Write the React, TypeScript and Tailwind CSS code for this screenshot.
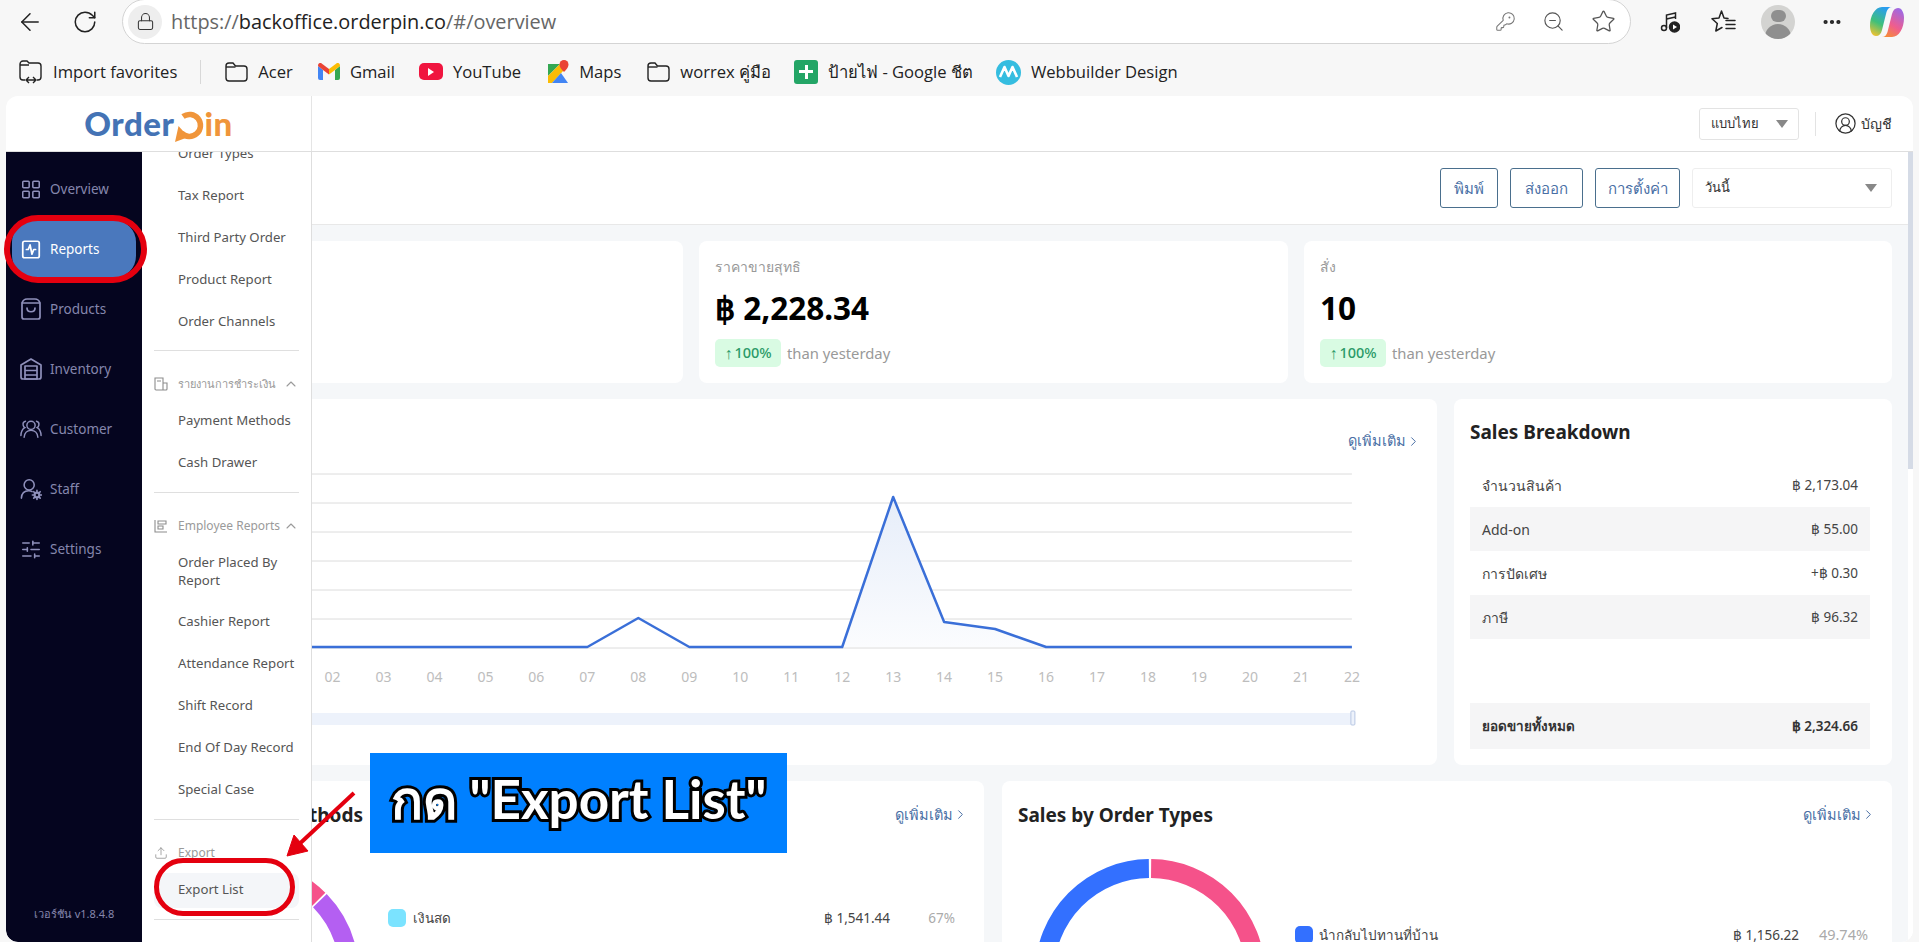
import { ArrowLeft, ChevronRight, ChevronUp, LayoutGrid, Lock, MoreHorizontal, RotateCw, SlidersHorizontal, SquareActivity, Star, Upload, ZoomOut, KeyRound, CircleUserRound } from "lucide-react";
import type { ReactNode } from "react";

const chromeFont = "font-['Open_Sans','Noto_Sans',sans-serif]";

function FolderIcon() {
  return (
    <svg width="24" height="22" viewBox="0 0 24 22" fill="none" stroke="#222" strokeWidth="1.4">
      <path d="M2 5a3 3 0 0 1 3-3h4l2.5 3H20a3 3 0 0 1 3 3v9a3 3 0 0 1-3 3H5a3 3 0 0 1-3-3Z" />
      <path d="M2 6h9.5" />
    </svg>
  );
}

function Bookmark({ icon, label }: { icon: ReactNode; label: string }) {
  return (
    <div className="flex items-center gap-[10px]">
      {icon}
      <span className="text-[16.6px] text-[#222] whitespace-nowrap">{label}</span>
    </div>
  );
}

function BrowserChrome() {
  return (
    <div className={chromeFont}>
      <div className="h-[48px] flex items-start">
        <div className="w-[122px] h-[44px] flex items-center pl-[16px] gap-[28px] shrink-0">
          <ArrowLeft size={28} strokeWidth={1.3} color="#222" />
          <RotateCw size={26} strokeWidth={1.4} color="#222" />
        </div>
        <div className="w-[1509px] h-[45px] -mt-px bg-white rounded-r-full rounded-l-full border border-[#d4d4d4] flex items-center pl-[5px] pr-[14px] shrink-0">
          <div className="w-[34px] h-[34px] rounded-full bg-[#eeeeee] flex items-center justify-center">
            <Lock size={19} strokeWidth={1.3} color="#333" />
          </div>
          <div className="ml-[9px] text-[19.9px] text-[#666] whitespace-nowrap">
            https://<span className="text-[#222]">backoffice.orderpin.co</span>/#/overview
          </div>
          <div className="ml-auto flex items-center gap-[26px] text-[#777]">
            <KeyRound size={21} strokeWidth={1.2} />
            <ZoomOut size={23} strokeWidth={1.2} color="#555" />
            <Star size={25} strokeWidth={1.2} color="#555" />
          </div>
        </div>
        <div className="flex-1 h-[44px] flex items-center relative">
          <svg className="ml-[29px]" width="20" height="22" viewBox="0 0 20 22" fill="none" stroke="#222" strokeWidth="1.5">
            <circle cx="4" cy="17" r="2.5" />
            <path d="M6.5 17V4l9-2v6" />
            <path d="M6.5 8l9-2" />
            <circle cx="14.5" cy="16" r="5" fill="#222" />
            <path d="M13 13.5v5l4-2.5Z" fill="#fff" stroke="none" />
          </svg>
          <svg className="ml-[31px]" width="26" height="26" viewBox="0 0 26 26" fill="none" stroke="#222" strokeWidth="1.5" strokeLinejoin="round" strokeLinecap="round">
            <path d="M17 9.500 13 9 10.500 2 8 9l-7 .8 5.300 4.700L4.800 22l6.200-3.500" />
            <path d="M15 11.500h9M15 15.500h9M15 19.500h9" />
          </svg>
          <div className="ml-[24px] w-[34px] h-[34px] rounded-full bg-[#d3d3d1] overflow-hidden flex flex-col items-center shrink-0">
            <div className="w-[15px] h-[15px] mt-[5px] rounded-full bg-[#8f8f8f]" />
            <div className="w-[26px] h-[20px] mt-[2px] rounded-t-full bg-[#8f8f8f]" />
          </div>
          <MoreHorizontal className="ml-[26px]" size={22} strokeWidth={2.6} color="#222" />
          <svg className="ml-[27px]" width="34" height="32" viewBox="0 0 34 32">
            <defs>
              <linearGradient id="cpA" x1="0.6" y1="0" x2="0.2" y2="1">
                <stop offset="0" stopColor="#2a9df0" />
                <stop offset="0.55" stopColor="#3fc07a" />
                <stop offset="1" stopColor="#f2c230" />
              </linearGradient>
              <linearGradient id="cpB" x1="0.8" y1="0" x2="0.3" y2="1">
                <stop offset="0" stopColor="#9a6ae8" />
                <stop offset="0.6" stopColor="#ef5d8e" />
                <stop offset="1" stopColor="#f58a3c" />
              </linearGradient>
            </defs>
            <path d="M12 1h10c-3 0-4.500 2-5.500 5L12 24c-1 4-3 6-6 6-4 0-6-5-6-10C0 10 5 1 12 1Z" fill="url(#cpA)" />
            <path d="M22 31H12c3 0 4.500-2 5.500-5L22 8c1-4 3-6 6-6 4 0 6 5 6 10 0 10-5 19-12 19Z" fill="url(#cpB)" />
          </svg>
        </div>
      </div>
      <div className="h-[48px] flex items-center pl-[18px]">
        <Bookmark
          label="Import favorites"
          icon={
            <svg width="25" height="24" viewBox="0 0 25 24" fill="none" stroke="#222" strokeWidth="1.4">
              <path d="M7 20H5a3 3 0 0 1-3-3V4a3 3 0 0 1 3-3h4l2 2h9a3 3 0 0 1 3 3v11a3 3 0 0 1-3 3h-1" />
              <path d="M2 5h9M9 20h8M11 17l-3 3 3 3M15 17l3 3-3 3" />
            </svg>
          }
        />
        <div className="w-px h-[24px] bg-[#d8d8d8] mx-[23px]" />
        <Bookmark label="Acer" icon={<FolderIcon />} />
        <div className="ml-[25px]">
          <Bookmark
            label="Gmail"
            icon={
              <svg width="22" height="17" viewBox="0 0 22 17">
                <path d="M0 3v12a2 2 0 0 0 2 2h3V7Z" fill="#4285f4" />
                <path d="M22 3v12a2 2 0 0 1-2 2h-3V7Z" fill="#34a853" />
                <path d="M0 3l5 4 6 4.500V6L3 0C1 -.5 0 1 0 3Z" fill="#ea4335" />
                <path d="M22 3l-5 4-6 4.500V6l8-6c2-.5 3 1 3 3Z" fill="#fbbc04" />
              </svg>
            }
          />
        </div>
        <div className="ml-[24px]">
          <Bookmark
            label="YouTube"
            icon={
              <div className="w-[24px] h-[17px] rounded-[5px] bg-[#f0153f] flex items-center justify-center">
                <div className="w-0 h-0 border-y-[4px] border-y-transparent border-l-[6px] border-l-white" />
              </div>
            }
          />
        </div>
        <div className="ml-[26px]">
          <Bookmark
            label="Maps"
            icon={
              <svg width="22" height="24" viewBox="0 0 22 24">
                <path d="M1 4h12L1 16Z" fill="#34a853" />
                <path d="M1 16 13 4l4 6L5 23H1Z" fill="#fbbc04" />
                <path d="M5 23 14 13l7 10Z" fill="#4285f4" />
                <path d="M17 0a4.500 4.500 0 0 1 4.500 4.500C21.500 8 17 12 17 12s-4.500-4-4.500-7.500A4.500 4.500 0 0 1 17 0Z" fill="#ea4335" />
              </svg>
            }
          />
        </div>
        <div className="ml-[25px]">
          <Bookmark label="worrex คู่มือ" icon={<FolderIcon />} />
        </div>
        <div className="ml-[23px]">
          <Bookmark
            label="ป้ายไฟ - Google ชีต"
            icon={
              <div className="w-[24px] h-[24px] rounded-[3px] bg-[#23a566] flex items-center justify-center relative">
                <div className="w-[14px] h-[3px] bg-white" />
                <div className="absolute w-[3px] h-[14px] bg-white" />
              </div>
            }
          />
        </div>
        <div className="ml-[23px]">
          <Bookmark
            label="Webbuilder Design"
            icon={
              <svg width="25" height="25" viewBox="0 0 25 25">
                <circle cx="12.500" cy="12.500" r="12.500" fill="#35bde0" />
                <path d="M4 17 8.500 7l4 9 4-9L21 17" fill="none" stroke="#fff" strokeWidth="2.600" strokeLinejoin="round" />
              </svg>
            }
          />
        </div>
      </div>
    </div>
  );
}

function Logo() {
  return (
    <div className="flex items-center font-['Lato',sans-serif] font-black text-[33px] leading-none tracking-[0.5px]">
      <span className="text-[#4473b5]">Order</span>
      <svg className="mt-[7px]" width="30" height="32" viewBox="0 0 30 32" fill="none">
        <path d="M9 5.500A11 11 0 1 1 7.500 22" stroke="#f0953a" strokeWidth="5.500" />
        <path d="M1 31 4.500 15l10 11Z" fill="#f0953a" />
      </svg>
      <span className="text-[#f0953a]">in</span>
    </div>
  );
}

function PageHeader() {
  return (
    <div className="h-[56px] flex border-b border-[#dedede] shrink-0">
      <div className="w-[306px] border-r border-[#e5e5e5] flex items-center justify-center">
        <Logo />
      </div>
      <div className="flex-1 flex items-center justify-end pr-[21px]">
        <div className="w-[100px] h-[32px] border border-[#e3e3e3] rounded-[3px] flex items-center justify-between pl-[11px] pr-[10px] text-[13px] text-[#333]">
          แบบไทย
          <div className="w-0 h-0 border-x-[6px] border-x-transparent border-t-[8px] border-t-[#888]" />
        </div>
        <div className="w-px h-[24px] bg-[#e3e3e3] ml-[16px] mr-[18px]" />
        <CircleUserRound size={23} strokeWidth={1.3} color="#333" />
        <span className="ml-[4px] text-[14px] text-[#333]">บัญชี</span>
      </div>
    </div>
  );
}

function BagIcon() {
  return (
    <svg width="20" height="22" viewBox="0 0 20 22" fill="none" stroke="currentColor" strokeWidth="1.700">
      <path d="M1 5h18v14a2 2 0 0 1-2 2H3a2 2 0 0 1-2-2Z" strokeLinejoin="round" />
      <path d="M1 5c1-3 3-4 5-4h8c2 0 4 1 5 4" />
      <path d="M6 10c0 5 8 5 8 0" strokeLinecap="round" />
    </svg>
  );
}

function InventoryIcon() {
  return (
    <svg width="22" height="22" viewBox="0 0 22 22" fill="none" stroke="currentColor" strokeWidth="1.700" strokeLinejoin="round">
      <path d="M1 7 11 1l10 6v12a2 2 0 0 1-2 2H3a2 2 0 0 1-2-2Z" />
      <path d="M5 8h12v13H5ZM5 12.500h12M5 17h12" />
    </svg>
  );
}

function CustomerIcon() {
  return (
    <svg width="24" height="20" viewBox="0 0 24 20" fill="none" stroke="currentColor" strokeWidth="1.600" strokeLinecap="round">
      <circle cx="12" cy="6" r="4.500" />
      <path d="M4.500 19c.5-5 3-7.500 7.500-7.500S19 14 19.500 19" />
      <path d="M6 1.500C4 2 3 4 3.500 6c.2 1 .8 2 1.800 2.500C2.500 10 1.200 13 1 17M18 1.500c2 .5 3 2.500 2.500 4.500-.2 1-.8 2-1.800 2.500 2.800 1.500 4.100 4.500 4.300 8.500" />
    </svg>
  );
}

function StaffIcon() {
  return (
    <svg width="24" height="24" viewBox="0 0 24 24" fill="none" stroke="currentColor" strokeWidth="1.700" strokeLinecap="round">
      <circle cx="10" cy="7.500" r="5.500" />
      <path d="M1.500 22c.3-5 3.500-8 8-8 1.500 0 2.700.3 3.700.9" />
      <circle cx="18.500" cy="18.500" r="2.600" strokeWidth="2.400" />
      <path d="M18.500 13.500v1.200M18.500 22.300v1.200M13.500 18.500h1.200M22.300 18.500h1.200M15 15l.9.9M21.100 21.100l.9.9M22 15l-.9.9M15.900 21.100l-.9.9" strokeWidth="1.800" />
    </svg>
  );
}

const navItems: { label: string; icon: ReactNode; active?: boolean }[] = [
  { label: "Overview", icon: <LayoutGrid size={23} strokeWidth={1.7} /> },
  { label: "Reports", icon: <SquareActivity size={23} strokeWidth={1.9} />, active: true },
  { label: "Products", icon: <BagIcon /> },
  { label: "Inventory", icon: <InventoryIcon /> },
  { label: "Customer", icon: <CustomerIcon /> },
  { label: "Staff", icon: <StaffIcon /> },
  { label: "Settings", icon: <SlidersHorizontal size={23} strokeWidth={1.7} /> },
];

function Sidebar() {
  return (
    <div className="w-[136px] bg-[#05051f] flex flex-col pt-[7px] shrink-0 rounded-bl-[12px]">
      {navItems.map((n) => (
        <div
          key={n.label}
          className={`mx-[6px] h-[58px] my-px rounded-[22px] flex items-center pl-[8px] ${n.active ? "bg-[#4a78bd] text-white" : "text-[#8f90bb]"}`}
        >
          <div className="w-[22px] flex justify-center shrink-0">{n.icon}</div>
          <span className={`ml-[8px] text-[13.5px] ${n.active ? "text-white" : "text-[#8587ad]"}`}>{n.label}</span>
        </div>
      ))}
      <div className="mt-auto pb-[20px] text-center text-[11px] text-[#8587ad]">เวอร์ชัน v1.8.4.8</div>
    </div>
  );
}

function MenuItem({ label, active }: { label: string; active?: boolean }) {
  return (
    <div className="h-[42px] flex items-center">
      <div className={`w-[146px] h-[35px] flex items-center pl-[24px] rounded-[8px] text-[13.2px] text-[#555] whitespace-nowrap ${active ? "bg-[#f4f6f9]" : ""}`}>
        {label}
      </div>
    </div>
  );
}

function MenuHeader({ icon, label, chevron = true, small }: { icon: ReactNode; label: string; chevron?: boolean; small?: boolean }) {
  return (
    <div className="h-[40px] mt-[13px] -mb-[4px] flex items-center text-[#9a9a9a]">
      <div className="w-[24px] shrink-0 text-[#8c8c8c]">{icon}</div>
      <span className={`whitespace-nowrap ${small ? "text-[11px]" : "text-[12px]"}`}>{label}</span>
      {chevron && <ChevronUp className="ml-auto" size={16} strokeWidth={1.6} />}
    </div>
  );
}

function Divider({ className = "mt-[8px]" }: { className?: string }) {
  return <div className={`h-px bg-[#dfdfdf] ${className}`} />;
}

function Submenu() {
  return (
    <div className="w-[170px] border-r border-[#dedede] bg-white overflow-hidden shrink-0 pl-[12px] pr-[12px]">
      <div className="-mt-[19px]">
        {["Order Types", "Tax Report", "Third Party Order", "Product Report", "Order Channels"].map((s) => (
          <MenuItem key={s} label={s} />
        ))}
        <Divider className="mt-[7px]" />
        <MenuHeader
          small
          label="รายงานการชำระเงิน"
          icon={
            <svg width="14" height="14" viewBox="0 0 14 14" fill="none" stroke="currentColor" strokeWidth="1.100">
              <path d="M1 1h8v12H2a1 1 0 0 1-1-1ZM9 6h4v6a1 1 0 0 1-1 1H9ZM3 4h4" />
            </svg>
          }
        />
        <MenuItem label="Payment Methods" />
        <MenuItem label="Cash Drawer" />
        <Divider />
        <MenuHeader
          label="Employee Reports"
          icon={
            <svg width="14" height="14" viewBox="0 0 14 14" fill="none" stroke="currentColor" strokeWidth="1.100">
              <path d="M1 1v12h12M4 2h8v3H4ZM4 7h5v3H4Z" />
            </svg>
          }
        />
        <div className="h-[59px] pb-[2px] flex items-center pl-[24px] text-[13.2px] leading-[18px] text-[#555]">Order Placed By<br />Report</div>
        {["Cashier Report", "Attendance Report", "Shift Record", "End Of Day Record", "Special Case"].map((s) => (
          <MenuItem key={s} label={s} />
        ))}
        <Divider />
        <MenuHeader label="Export" chevron={false} icon={<Upload size={14} strokeWidth={1.300} />} />
        <MenuItem label="Export List" active />
        <Divider />
      </div>
    </div>
  );
}

function StatCard({ label, value, className }: { label?: string; value?: string; className: string }) {
  return (
    <div className={`h-[142px] bg-white rounded-[8px] pl-[16px] ${className}`}>
      {label && (
        <>
          <div className="pt-[15px] h-[37px] text-[14px] text-[#999] leading-[22px]">{label}</div>
          <div className="mt-[8px] h-[44px] text-[31.5px] leading-[44px] font-bold text-black">{value}</div>
          <div className="mt-[9px] flex items-center">
            <div className="w-[66px] h-[28px] rounded-[5px] bg-[#d9fbe3] text-[#2b9a68] text-[14.5px] font-medium flex items-center justify-center gap-[2px]">
              <span className="text-[16px] font-bold leading-none">↑</span>100%
            </div>
            <span className="ml-[6px] text-[14.8px] text-[#999]">than yesterday</span>
          </div>
        </>
      )}
    </div>
  );
}

function MoreLink() {
  return (
    <div className="flex items-center text-[14.5px] text-[#4a6fa5] whitespace-nowrap">
      ดูเพิ่มเติม
      <ChevronRight size={15} strokeWidth={1.6} />
    </div>
  );
}

// x of a label in the chart svg, 50.97px per hour, "02" sitting at x=20.5
const chartX = (h: number) => 20.5 + (h - 2) * 50.97;
const chartHours = Array.from({ length: 21 }, (_, i) => i + 2);
const gridYs = [13, 42, 71, 100, 129, 158, 187];
const chartLine: [number, number][] = [
  [-20, 186], [7, 186], [8, 157], [9, 186], [12, 186], [13, 36], [14, 161], [15, 168], [16, 186], [22, 186],
];

function SalesChart() {
  const pts = chartLine.map(([h, y]) => `${h < 0 ? 0 : chartX(h)},${y}`).join(" ");
  return (
    <svg width="1060" height="279" viewBox="0 0 1060 279" className="block">
      <defs>
        <linearGradient id="peak" x1="0" y1="0" x2="0" y2="1">
          <stop offset="0" stopColor="#e6edf9" />
          <stop offset="1" stopColor="#fbfcfe" />
        </linearGradient>
      </defs>
      {gridYs.map((y) => (
        <line key={y} x1="0" x2={chartX(22)} y1={y} y2={y} stroke="#dcdcdc" strokeWidth="1" />
      ))}
      <polygon points={`${chartX(12)},186 ${chartX(13)},36 ${chartX(14)},161 ${chartX(15)},168 ${chartX(16)},186`} fill="url(#peak)" />
      <polyline points={pts} fill="none" stroke="#3a6fd8" strokeWidth="2.5" strokeLinejoin="round" />
      {chartHours.map((h) => (
        <text key={h} x={chartX(h)} y="221" textAnchor="middle" fontSize="14" fill="#bdbdbd">
          {String(h).padStart(2, "0")}
        </text>
      ))}
      <rect x="0" y="252" width={chartX(22)} height="12" fill="#edf2fb" />
      <rect x={chartX(22) - 1} y="250" width="4" height="14" rx="1" fill="#edf2fb" stroke="#b9c8e4" />
    </svg>
  );
}

function BreakdownRow({ label, value, shaded }: { label: string; value: string; shaded?: boolean }) {
  return (
    <div className={`h-[44px] flex items-center justify-between pl-[12px] pr-[12px] text-[#444] ${shaded ? "bg-[#f5f5f6]" : ""}`}>
      <span className="text-[14px]">{label}</span>
      <span className="text-[13.5px]">{value}</span>
    </div>
  );
}

function arcPath(cx: number, cy: number, r: number, a0: number, a1: number) {
  const p = (a: number) => {
    const t = (a * Math.PI) / 180;
    return `${cx + r * Math.sin(t)} ${cy - r * Math.cos(t)}`;
  };
  return `M${p(a0)} A${r} ${r} 0 ${a1 - a0 > 180 ? 1 : 0} 1 ${p(a1)}`;
}

function Main() {
  return (
    <div className="flex-1 flex overflow-hidden">
      <div className="flex-1 bg-[#f5f7f9] overflow-hidden">
        <div className="h-[73px] bg-white border-b border-[#e8e8e8] flex items-center justify-end gap-[12px] pr-[16px] text-[15px] text-[#4a6fa5]">
          <div className="w-[58px] h-[40px] border border-[#4a6f8d] rounded-[3px] flex items-center justify-center">พิมพ์</div>
          <div className="w-[73px] h-[40px] border border-[#4a6f8d] rounded-[3px] flex items-center justify-center">ส่งออก</div>
          <div className="w-[85px] h-[40px] border border-[#4a6f8d] rounded-[3px] flex items-center justify-center">การตั้งค่า</div>
          <div className="w-[200px] h-[40px] border border-[#eeeeee] rounded-[3px] flex items-center justify-between pl-[12px] pr-[14px] text-[13px] text-[#333]">
            วันนี้
            <div className="w-0 h-0 border-x-[6px] border-x-transparent border-t-[8px] border-t-[#888]" />
          </div>
        </div>

        <div className="pt-[16px] pr-[16px] flex gap-[16px]">
          <StatCard className="w-[371px] rounded-l-none" />
          <StatCard className="w-[589px]" label="ราคาขายสุทธิ" value="฿ 2,228.34" />
          <StatCard className="flex-1" label="สั่ง" value="10" />
        </div>

        <div className="pt-[16px] pr-[16px] flex gap-[17px] h-[382px]">
          <div className="w-[1125px] bg-white rounded-r-[8px]">
            <div className="h-[62px] pt-[22px] pr-[16px] flex justify-end">
              <MoreLink />
            </div>
            <SalesChart />
          </div>
          <div className="flex-1 bg-white rounded-[8px] pl-[16px] pr-[22px] pb-[16px] flex flex-col">
            <div className="h-[64px] pt-[16px] text-[19px] font-bold text-[#222] leading-[34px]">Sales Breakdown</div>
            <BreakdownRow label="จำนวนสินค้า" value="฿ 2,173.04" />
            <BreakdownRow label="Add-on" value="฿ 55.00" shaded />
            <BreakdownRow label="การปัดเศษ" value="+฿ 0.30" />
            <BreakdownRow label="ภาษี" value="฿ 96.32" shaded />
            <div className="mt-auto h-[46px] bg-[#f5f5f6] flex items-center justify-between px-[12px] text-[13.500px] font-semibold text-[#333]">
              <span>ยอดขายทั้งหมด</span>
              <span>฿ 2,324.66</span>
            </div>
          </div>
        </div>

        <div className="pt-[16px] pr-[16px] flex gap-[18px]">
          <div className="w-[672px] h-[300px] bg-white rounded-r-[8px]">
            <div className="h-[78px] flex justify-between items-start pt-[20px] pr-[16px]">
              <div className="w-[51px] overflow-hidden flex justify-end">
                <span className="text-[19px] font-bold text-[#222] whitespace-nowrap leading-[28px]">Sales by Payment Methods</span>
              </div>
              <div className="pt-[3px]">
                <MoreLink />
              </div>
            </div>
            <div className="flex">
              <svg width="46" height="90" viewBox="0 0 46 90" fill="none" className="shrink-0">
                <path d={arcPath(-68, 115, 105.5, 20, 45)} stroke="#f5528a" strokeWidth="19" />
                <path d={arcPath(-68, 115, 105.5, 46, 110)} stroke="#b45ff2" strokeWidth="19" />
              </svg>
              <div className="ml-[30px] mt-[50px] w-[567px] h-[18px] flex items-center text-[13.5px] text-[#444]">
                <div className="w-[18px] h-[18px] rounded-[5px] bg-[#7be3ff]" />
                <span className="ml-[7px]">เงินสด</span>
                <span className="ml-auto">฿ 1,541.44</span>
                <span className="ml-[38px] text-[#aaa] w-[27px] text-right">67%</span>
              </div>
            </div>
          </div>
          <div className="flex-1 h-[300px] bg-white rounded-[8px] pl-[16px] pr-[16px]">
            <div className="h-[78px] flex justify-between items-start pt-[20px]">
              <span className="text-[19px] font-bold text-[#222] leading-[28px]">Sales by Order Types</span>
              <div className="pt-[3px]">
                <MoreLink />
              </div>
            </div>
            <div className="flex">
              <svg width="230" height="230" viewBox="0 0 230 230" fill="none" className="ml-[17px] shrink-0">
                <path d={arcPath(115, 115, 105.5, 0.6, 179)} stroke="#f5528a" strokeWidth="19" />
                <path d={arcPath(115, 115, 105.5, 181, 359.4)} stroke="#3370ff" strokeWidth="19" />
              </svg>
              <div className="ml-[30px] mt-[67px] w-[573px] h-[18px] flex items-center text-[13.5px] text-[#444]">
                <div className="w-[18px] h-[18px] rounded-[5px] bg-[#3370ff]" />
                <span className="ml-[6px]">นำกลับไปทานที่บ้าน</span>
                <span className="ml-auto">฿ 1,156.22</span>
                <span className="ml-[19px] text-[14.5px] text-[#aaa] w-[50px] text-right">49.74%</span>
              </div>
            </div>
          </div>
        </div>
      </div>
      <div className="w-[5px] bg-white shrink-0">
        <div className="h-[317px] bg-[#d5dbe6]" />
      </div>
    </div>
  );
}

function Annotations() {
  return (
    <>
      <div className="absolute left-[4px] top-[215px] w-[143px] h-[68px] rounded-[34px] border-[6px] border-[#e4000f]" />
      <div className="absolute left-[154px] top-[858px] w-[141px] h-[58px] rounded-[29px] border-[5px] border-[#e4000f]" />
      <svg className="absolute left-[280px] top-[785px]" width="80" height="76" viewBox="0 0 80 76" fill="none">
        <path d="M74 8 14 64" stroke="#e4000f" strokeWidth="4" />
        <path d="M7 71 14 50 28 66Z" fill="#e4000f" stroke="#e4000f" strokeWidth="1" />
      </svg>
      <div className="absolute left-[370px] top-[753px] w-[417px] h-[100px] pb-[8px] bg-[#0080ff] flex items-center justify-center font-['Lato','Noto_Sans',sans-serif] font-bold text-[53px] text-white whitespace-nowrap [-webkit-text-stroke:6px_#000] [paint-order:stroke_fill]">
        กด "Export List"
      </div>
    </>
  );
}

export default function App() {
  return (
    <div className="relative w-[1919px] h-[942px] overflow-hidden bg-[#f7f7f7] font-['Noto_Sans',sans-serif]">
      <BrowserChrome />
      <div className="ml-[6px] w-[1907px] h-[846px] bg-white rounded-t-[12px] rounded-b-[12px] flex flex-col overflow-hidden">
        <PageHeader />
        <div className="flex-1 flex min-h-0">
          <Sidebar />
          <Submenu />
          <Main />
        </div>
      </div>
      <Annotations />
    </div>
  );
}
